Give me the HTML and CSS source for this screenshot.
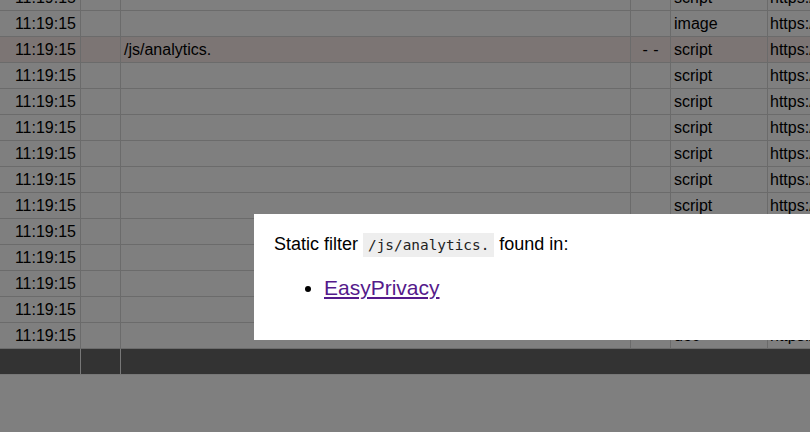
FILE: index.html
```html
<!DOCTYPE html>
<html lang="en">
<head>
<meta charset="utf-8">
<title>Logger</title>
<link rel="stylesheet" href="styles.css">
</head>
<body>
<div class="page">
  <div class="table">
    <div class="row"><div class="c c1">11:19:15</div><div class="c c2"></div><div class="c c3"></div><div class="c c4"></div><div class="c c5">script</div><div class="c c6">https://www.example.com/js/app.js</div></div>
    <div class="row"><div class="c c1">11:19:15</div><div class="c c2"></div><div class="c c3"></div><div class="c c4"></div><div class="c c5">image</div><div class="c c6">https://www.example.com/img/logo.png</div></div>
    <div class="row blocked"><div class="c c1">11:19:15</div><div class="c c2"></div><div class="c c3">/js/analytics.</div><div class="c c4">- -</div><div class="c c5">script</div><div class="c c6">https://www.example.com/js/analytics.js</div></div>
    <div class="row"><div class="c c1">11:19:15</div><div class="c c2"></div><div class="c c3"></div><div class="c c4"></div><div class="c c5">script</div><div class="c c6">https://www.example.com/js/a.js</div></div>
    <div class="row"><div class="c c1">11:19:15</div><div class="c c2"></div><div class="c c3"></div><div class="c c4"></div><div class="c c5">script</div><div class="c c6">https://www.example.com/js/b.js</div></div>
    <div class="row"><div class="c c1">11:19:15</div><div class="c c2"></div><div class="c c3"></div><div class="c c4"></div><div class="c c5">script</div><div class="c c6">https://www.example.com/js/c.js</div></div>
    <div class="row"><div class="c c1">11:19:15</div><div class="c c2"></div><div class="c c3"></div><div class="c c4"></div><div class="c c5">script</div><div class="c c6">https://www.example.com/js/d.js</div></div>
    <div class="row"><div class="c c1">11:19:15</div><div class="c c2"></div><div class="c c3"></div><div class="c c4"></div><div class="c c5">script</div><div class="c c6">https://www.example.com/js/e.js</div></div>
    <div class="row"><div class="c c1">11:19:15</div><div class="c c2"></div><div class="c c3"></div><div class="c c4"></div><div class="c c5">script</div><div class="c c6">https://www.example.com/js/f.js</div></div>
    <div class="row"><div class="c c1">11:19:15</div><div class="c c2"></div><div class="c c3"></div><div class="c c4"></div><div class="c c5">script</div><div class="c c6">https://www.example.com/js/g.js</div></div>
    <div class="row"><div class="c c1">11:19:15</div><div class="c c2"></div><div class="c c3"></div><div class="c c4"></div><div class="c c5">script</div><div class="c c6">https://www.example.com/js/h.js</div></div>
    <div class="row"><div class="c c1">11:19:15</div><div class="c c2"></div><div class="c c3"></div><div class="c c4"></div><div class="c c5">script</div><div class="c c6">https://www.example.com/js/i.js</div></div>
    <div class="row"><div class="c c1">11:19:15</div><div class="c c2"></div><div class="c c3"></div><div class="c c4"></div><div class="c c5">script</div><div class="c c6">https://www.example.com/js/j.js</div></div>
    <div class="row"><div class="c c1">11:19:15</div><div class="c c2"></div><div class="c c3"></div><div class="c c4"></div><div class="c c5">doc</div><div class="c c6">https://www.example.com/</div></div>
    <div class="row bar"><div class="c c1"></div><div class="c c2"></div><div class="c c3 nob"></div><div class="c c4 nob"></div><div class="c c5 nob"></div><div class="c c6"></div></div>
  </div>
</div>
<div class="overlay"></div>
<div class="modal">
  <p class="msg">Static filter <code>/js/analytics.</code> found in:</p>
  <ul class="lists">
    <li><a href="#easyprivacy" class="visited">EasyPrivacy</a></li>
  </ul>
</div>
</body>
</html>
```

FILE: styles.css
```css
html, body {
  margin: 0;
  padding: 0;
  height: 100%;
  overflow: hidden;
}
body {
  background: #ffffff;
  font-family: "Liberation Sans", Arial, sans-serif;
  color: #000;
  position: relative;
}
.page {
  height: 100%;
  overflow: hidden;
}
.table {
  margin-top: -15px;
  display: flex;
  flex-direction: column;
}
.row {
  display: grid;
  grid-template-columns: 81px 40px 510px 40px 97px 1fr;
  height: 26px;
  box-sizing: border-box;
  border-bottom: 1px solid #d6d6d6;
  font-size: 16px;
}
.row.blocked {
  background: #f8ebe9;
}
.c {
  box-sizing: border-box;
  border-right: 1px solid #d6d6d6;
  padding: 0 3px;
  line-height: 25px;
  white-space: nowrap;
  overflow: hidden;
}
.c1 { text-align: right; padding-right: 4px; }
.c3 { padding-left: 3px; }
.c4 { text-align: center; word-spacing: 1px; }
.c6 { border-right: 0; padding-left: 2px; }
.row.bar {
  background: #666666;
  border-bottom: 1px solid #eeeeee;
}
.row.bar .c { border-right-color: #eeeeee; }
.row.bar .c.nob { border-right-color: transparent; }
.overlay {
  position: absolute;
  inset: 0;
  background: rgba(0, 0, 0, 0.5);
}
.modal {
  position: absolute;
  left: 254px;
  top: 214px;
  width: 620px;
  box-sizing: border-box;
  padding: 20px;
  background: #ffffff;
  color: #000;
}
.msg {
  margin: 0;
  font-size: 18px;
}
.msg code {
  font-family: "DejaVu Sans Mono", monospace;
  font-size: 0.8em;
  background: #eeeeee;
  padding: 4px 5px;
  color: #222;
}
.lists {
  margin: 21px 0 20px;
  padding-left: 50px;
  font-size: 21px;
}
.lists a {
  color: #551a8b;
  text-decoration: underline;
}
```
